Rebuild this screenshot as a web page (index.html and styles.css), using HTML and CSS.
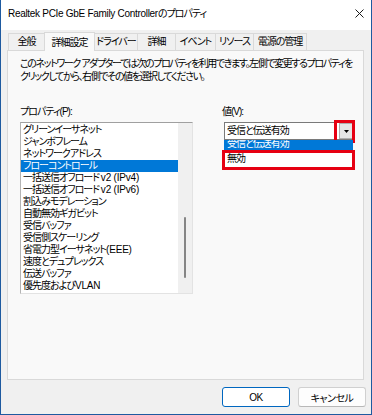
FILE: index.html
```html
<!doctype html>
<html lang="ja">
    <head>
        <meta charset="UTF-8" />
        <meta name="viewport" content="width=device-width, initial-scale=1.0" />
        <title>Realtek PCIe GbE Family Controllerのプロパティ</title>
        <link rel="stylesheet" href="styles.css">
    </head>
    <body>
        <div class="window">
            <header class="titlebar">
                <span class="title"><span class="en">Realtek PCIe GbE Family Controller</span>のプロパティ</span>
                <svg class="close" width="9" height="9" viewBox="0 0 9 9">
                    <path d="M0.5 0.5L8.5 8.5M8.5 0.5L0.5 8.5" stroke="#1a1a1a" stroke-width="1" fill="none" />
                </svg>
            </header>

            <nav class="tabs">
                <span class="tab tab-general">全般</span>
                <span class="tab tab-advanced tab-active">詳細設定</span>
                <span class="tab tab-driver">ドライバー</span>
                <span class="tab tab-details">詳細</span>
                <span class="tab tab-events">イベント</span>
                <span class="tab tab-resources">リソース</span>
                <span class="tab tab-power">電源の管理</span>
            </nav>

            <section class="panel">
                <p class="desc">
                    このネットワーク アダプターでは次のプロパティを利用できます。左側で変更するプロパティを<br />
                    クリックしてから、右側でその値を選択してください。
                </p>

                <div class="fields">
                    <div class="field">
                        <div class="label">プロパティ(P):</div>
                        <div class="listbox">
                            <ul class="items">
                                <li>グリーンイーサネット</li>
                                <li>ジャンボフレーム</li>
                                <li>ネットワークアドレス</li>
                                <li class="selected">フローコントロール</li>
                                <li>一括送信オフロード <span class="en">v2 (IPv4)</span></li>
                                <li>一括送信オフロード <span class="en">v2 (IPv6)</span></li>
                                <li>割込みモデレーション</li>
                                <li>自動無効ギガビット</li>
                                <li>受信バッファ</li>
                                <li>受信側スケーリング</li>
                                <li>省電力型イーサネット<span class="en">(EEE)</span></li>
                                <li>速度とデュプレックス</li>
                                <li>伝送バッファ</li>
                                <li>優先度および<span class="en">VLAN</span></li>
                            </ul>
                            <div class="scrollbar"><div class="thumb"></div></div>
                        </div>
                    </div>

                    <div class="field field-value">
                        <div class="label">値(V):</div>
                        <div class="combo">
                            <span class="combo-text">受信と伝送有効</span>
                            <span class="combo-btn">
                                <svg width="5" height="3" viewBox="0 0 5 3"><path d="M0 0H5L2.5 3Z" fill="#000" /></svg>
                            </span>
                            <span class="mark mark-btn"></span>
                            <div class="dropdown">
                                <div class="drop-item drop-sel"><span>受信と伝送有効</span></div>
                                <div class="drop-item">無効</div>
                                <span class="mark mark-item"></span>
                            </div>
                        </div>
                    </div>
                </div>
            </section>

            <footer class="buttons">
                <button class="btn btn-default">OK</button>
                <button class="btn">キャンセル</button>
            </footer>
        </div>
    </body>
</html>
```

FILE: styles.css
```css
:root {
    --win-bg: #f0f0f0;
    --panel-bg: #f9f9f9;
    --line: #d9d9d9;
    --accent: #1e5aa0;
    --select: #0078d7;
    --mark: #e60012;
}

* {
    margin: 0;
    padding: 0;
    box-sizing: border-box;
}

body {
    width: 372px;
    height: 415px;
    font-family: "Liberation Sans", "Noto Sans CJK JP", sans-serif;
    font-feature-settings: "palt";
    font-size: 10px;
    letter-spacing: -1px;
    color: #000;
    background: #fff;
}

.en {
    letter-spacing: -0.2px;
}

.window {
    width: 372px;
    height: 415px;
    background: var(--win-bg);
    border: 1px solid var(--accent);
    border-top: none;
}

.titlebar {
    height: 30px;
    background: #fff;
    display: flex;
    justify-content: space-between;
    align-items: flex-start;
    padding: 7px 7px 0 7px;
    line-height: 13px;
}

.title .en {
    letter-spacing: -0.3px;
}

.close {
    margin-top: 2px;
}

.tabs {
    height: 20px;
    display: flex;
    align-items: flex-end;
    padding-left: 7px;
}

.tab {
    height: 17px;
    line-height: 16px;
    text-align: center;
    border: 1px solid var(--line);
    border-bottom: none;
    margin-right: -1px;
    background: var(--win-bg);
}

.tab-general { width: 37px; }
.tab-advanced { width: 51px; }
.tab-driver { width: 44px; }
.tab-details { width: 39px; }
.tab-events { width: 41px; }
.tab-resources { width: 39px; }
.tab-power { width: 54px; }

.tab-active {
    height: 19px;
    line-height: 19px;
    margin-bottom: -1px;
    background: var(--panel-bg);
    position: relative;
    z-index: 1;
}

.panel {
    height: 330px;
    margin: 0 7px 0 6px;
    background: var(--panel-bg);
    border: 1px solid var(--line);
    padding: 6px 12px 0 12px;
}

.desc {
    line-height: 13px;
    white-space: nowrap;
    letter-spacing: -1.4px;
}

.fields {
    display: grid;
    grid-template-columns: 173px 130px;
    column-gap: 31px;
    margin-top: 22px;
}

.label {
    line-height: 13px;
    height: 17px;
}

.field-value .label {
    margin-left: -2px;
}

.listbox {
    height: 172px;
    display: flex;
    background: #fff;
    border: 1px solid #e3e3e3;
    border-top-color: #a0a0a0;
    border-left-color: #b4b4b4;
}

.items {
    list-style: none;
    flex: 1;
    padding-top: 1px;
}

.items li {
    height: 12px;
    line-height: 12px;
    padding-left: 2px;
    white-space: nowrap;
}

.items .selected {
    background: var(--select);
    color: #fff;
}

.scrollbar {
    width: 14px;
    background: var(--win-bg);
    display: flex;
    justify-content: center;
    padding-top: 94px;
}

.thumb {
    width: 2px;
    height: 61px;
    border-radius: 1px;
    background: #858585;
}

.combo {
    height: 18px;
    display: flex;
    border: 1px solid #7a7a7a;
    background: #fff;
    position: relative;
}

.combo-text {
    flex: 1;
    line-height: 16px;
    padding-left: 2px;
}

.combo-btn {
    width: 14px;
    display: flex;
    align-items: center;
    justify-content: center;
    background: #e5e5e5;
    border: 1px solid #adadad;
}

.mark {
    position: absolute;
    border: 3px solid var(--mark);
}

.mark-btn {
    left: 109px;
    top: -3px;
    width: 21px;
    height: 23px;
}

.dropdown {
    position: absolute;
    left: -1px;
    top: 17px;
    width: 129px;
    background: #fff;
}

.drop-item {
    height: 17px;
    line-height: 17px;
    padding-left: 3px;
}

.drop-sel {
    height: 10px;
    overflow: hidden;
    background: var(--select);
    color: #fff;
}

.drop-sel span {
    display: block;
    line-height: 12px;
    margin-top: -2px;
}

.mark-item {
    left: -2px;
    top: 10px;
    width: 133px;
    height: 20px;
}

.buttons {
    display: flex;
    justify-content: flex-end;
    gap: 8px;
    padding: 7px 5px 0 0;
}

.btn {
    width: 68px;
    height: 20px;
    font: inherit;
    letter-spacing: -0.5px;
    color: #000;
    background: #fdfdfd;
    border: 1px solid #d0d0d0;
    border-bottom-color: #b8b8b8;
    border-radius: 3px;
}

.btn-default {
    background: #fff;
    border: 1px solid #0067c0;
}
```
